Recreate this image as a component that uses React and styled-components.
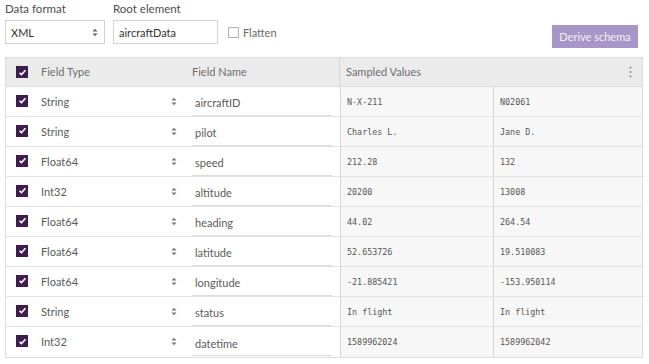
import React from "react";
import styled, { createGlobalStyle } from "styled-components";

const Global = createGlobalStyle`
  html, body { margin: 0; padding: 0; background: #fff; }
  body { font-family: Lato, "Open Sans", sans-serif; color: #4a4a4a; }
  * { box-sizing: border-box; }
`;

const Page = styled.div`
  width: 649px;
  height: 364px;
  padding: 1px 6px 0 5px;
  overflow: hidden;
`;

const TopBar = styled.div`
  display: flex;
  align-items: flex-end;
  justify-content: space-between;
  height: 47px;
  margin-bottom: 9px;
`;

const Controls = styled.div`
  display: flex;
  align-items: flex-end;
  gap: 8px;
  padding-bottom: 4px;
`;

const Field = styled.label`
  display: flex;
  flex-direction: column;
  gap: 3px;
`;

const Label = styled.span`
  font-size: 11.5px;
  line-height: 16px;
  color: #4e4e4e;
`;

const Select = styled.div`
  width: ${(p) => p.$w}px;
  height: 24px;
  border: 1px solid #d4d4d4;
  display: flex;
  align-items: center;
  justify-content: space-between;
  padding: 0 6px 0 5px;
  font-size: 11px;
  color: #323232;
  background: #fff;
`;

const TextInput = styled.div`
  width: ${(p) => p.$w}px;
  height: 24px;
  border: 1px solid #d4d4d4;
  display: flex;
  align-items: center;
  padding: 0 5px;
  font-size: 11px;
  color: #323232;
`;

const Flatten = styled.div`
  display: flex;
  align-items: center;
  gap: 4px;
  font-size: 11px;
  color: #6a6a6a;
  margin-left: 2px;
  height: 24px;
`;

const EmptyBox = styled.span`
  width: 11px;
  height: 11px;
  border: 1px solid #b0b0b0;
  background: #fff;
  display: inline-block;
`;

const DeriveButton = styled.button`
  height: 23px;
  width: 86px;
  border: none;
  background: #a996c8;
  color: #f4f0f8;
  font-family: Lato, sans-serif;
  font-size: 11px;
  padding: 0;
  margin-right: 5px;
`;

const Table = styled.div`
  width: 638px;
  border: 1px solid #dcdcdc;
`;

const cols = "30px 150px 154px 153px 1fr";

const HeaderRow = styled.div`
  display: grid;
  grid-template-columns: 30px 150px 153px 1fr;
  height: 29px;
  background: #ebebeb;
  border-bottom: 1px solid #dcdcdc;
  font-size: 11px;
  color: #6e6e6e;
`;

const Row = styled.div`
  display: grid;
  grid-template-columns: ${cols};
  height: 30px;
  border-bottom: ${(p) => (p.$last ? "none" : "1px solid #e3e3e3")};
  font-size: 11px;
`;

const CheckCell = styled.div`
  display: flex;
  align-items: center;
  padding-left: 10px;
  padding-bottom: ${(p) => (p.$raise ? 2 : 0)}px;
`;

const TypeCell = styled.div`
  display: flex;
  align-items: center;
  justify-content: space-between;
  padding: 0 9px 1px 5px;
  color: #5a5a5a;
`;

const HeadCell = styled.div`
  display: flex;
  align-items: center;
  justify-content: space-between;
  padding: 0 ${(p) => p.$pr || 0}px 1px ${(p) => p.$pl}px;
  border-left: ${(p) => (p.$divider ? "1px solid #d6d6d6" : "none")};
`;

const NameCell = styled.div`
  display: flex;
  align-items: center;
  padding-left: 6px;
`;

const NameInput = styled.div`
  width: 140px;
  height: 25px;
  margin-top: 3px;
  border-bottom: 1px solid #dcdcdc;
  display: flex;
  align-items: center;
  padding-left: 3px;
  color: #5a5a5a;
`;

const ValueCell = styled.div`
  background: #f7f7f7;
  border-left: 1px solid #d6d6d6;
  display: flex;
  align-items: center;
  padding-left: 6px;
  font-family: "DejaVu Sans Mono", "Liberation Mono", monospace;
  font-size: 8.4px;
  color: #555;
`;

const CheckBox = styled.span`
  width: 12px;
  height: 12px;
  background: #3e1d4c;
  display: inline-flex;
  align-items: center;
  justify-content: center;
`;

const Check = () => (
  <CheckBox>
    <svg width="9" height="9" viewBox="0 0 9 9">
      <path d="M1.6 4.8 L3.5 6.6 L7.5 2.3" stroke="#fff" strokeWidth="1.6" fill="none" />
    </svg>
  </CheckBox>
);

const Arrows = ({ color = "#777" }) => (
  <svg width="6" height="9" viewBox="0 0 6 9">
    <path d="M0.5 3.6 L3 0.8 L5.5 3.6 Z M0.5 5.4 L3 8.2 L5.5 5.4 Z" fill={color} />
  </svg>
);

const Kebab = () => (
  <svg width="3" height="12" viewBox="0 0 3 12">
    <circle cx="1.5" cy="1.5" r="1" fill="#8a8a8a" />
    <circle cx="1.5" cy="6" r="1" fill="#8a8a8a" />
    <circle cx="1.5" cy="10.5" r="1" fill="#8a8a8a" />
  </svg>
);

const rows = [
  ["String", "aircraftID", "N-X-211", "N02061"],
  ["String", "pilot", "Charles L.", "Jane D."],
  ["Float64", "speed", "212.28", "132"],
  ["Int32", "altitude", "20200", "13008"],
  ["Float64", "heading", "44.02", "264.54"],
  ["Float64", "latitude", "52.653726", "19.510083"],
  ["Float64", "longitude", "-21.885421", "-153.950114"],
  ["String", "status", "In flight", "In flight"],
  ["Int32", "datetime", "1589962024", "1589962042"],
];

export default function App() {
  return (
    <Page>
      <Global />
      <TopBar>
        <Controls>
          <Field>
            <Label>Data format</Label>
            <Select $w={100}>
              XML
              <Arrows color="#666" />
            </Select>
          </Field>
          <Field>
            <Label>Root element</Label>
            <TextInput $w={105}>aircraftData</TextInput>
          </Field>
          <Flatten>
            <EmptyBox />
            Flatten
          </Flatten>
        </Controls>
        <DeriveButton>Derive schema</DeriveButton>
      </TopBar>
      <Table>
        <HeaderRow>
          <CheckCell>
            <Check />
          </CheckCell>
          <HeadCell $pl={5}>Field Type</HeadCell>
          <HeadCell $pl={6}>Field Name</HeadCell>
          <HeadCell $pl={6} $pr={10} $divider>
            Sampled Values
            <Kebab />
          </HeadCell>
        </HeaderRow>
        {rows.map(([type, name, v1, v2], i) => (
          <Row key={name} $last={i === rows.length - 1}>
            <CheckCell $raise>
              <Check />
            </CheckCell>
            <TypeCell>
              {type}
              <Arrows />
            </TypeCell>
            <NameCell>
              <NameInput>{name}</NameInput>
            </NameCell>
            <ValueCell>{v1}</ValueCell>
            <ValueCell>{v2}</ValueCell>
          </Row>
        ))}
      </Table>
    </Page>
  );
}
